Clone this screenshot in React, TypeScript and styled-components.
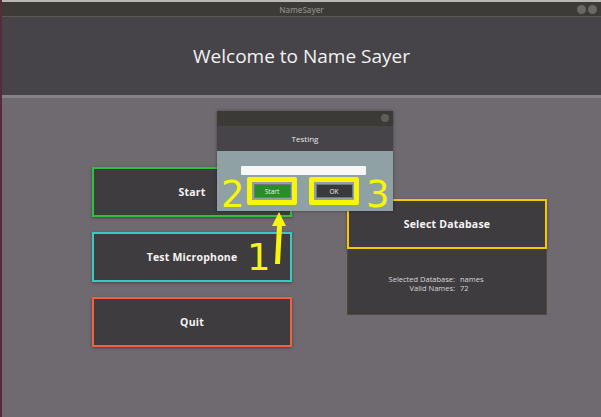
import React from "react";
import styled, { createGlobalStyle } from "styled-components";

const Global = createGlobalStyle`
  html, body { margin: 0; padding: 0; background: #6e6a70; }
  body { font-family: "Open Sans", "DejaVu Sans", sans-serif; overflow: hidden; }
  * { box-sizing: border-box; }
`;

const Screen = styled.div`
  position: relative;
  width: 601px;
  height: 417px;
  overflow: hidden;
  background: #6e6a70;
  border-left: 2px solid #5a2a3a;
`;

const TopStrip = styled.div`
  height: 2px;
  background: #b9b7b3;
`;

const TitleBar = styled.div`
  position: relative;
  height: 15px;
  background: #3c3b37;
  border-bottom: 1px solid #5a5955;
  display: flex;
  align-items: center;
  justify-content: center;
  font-size: 8px;
  color: #8a8883;
  font-weight: 600;
`;

const WinButtons = styled.div`
  position: absolute;
  right: 4px;
  top: 3px;
  display: flex;
  gap: 2px;
`;

const Dot = styled.span`
  width: 9px;
  height: 9px;
  border-radius: 50%;
  background: #6a6965;
`;

const Header = styled.div`
  height: 78px;
  background: #464448;
  display: flex;
  align-items: center;
  justify-content: center;
  color: #f2f2f2;
  font-size: 19px;
`;

const Divider = styled.div`
  height: 3px;
  background: #858188;
`;

const Body = styled.div`
  display: flex;
  align-items: flex-start;
  padding: 69px 0 0 90px;
  gap: 55px;
`;

const Column = styled.div<{ $top?: number }>`
  display: flex;
  flex-direction: column;
  gap: 15px;
  width: 200px;
  margin-top: ${(p) => p.$top ?? 0}px;
`;

const MenuButton = styled.div<{ $color: string }>`
  height: 50px;
  background: #3f3c40;
  border: 2px solid ${(p) => p.$color};
  box-shadow: 0 1px 3px rgba(0, 0, 0, 0.35);
  display: flex;
  align-items: center;
  justify-content: center;
  color: #f4f4f4;
  font-weight: 700;
  font-size: 10.5px;
  letter-spacing: 0.2px;
`;

const DbGroup = styled.div`
  display: flex;
  flex-direction: column;
  width: 200px;
`;

const InfoPanel = styled.div`
  height: 66px;
  background: #3f3c40;
  border: 1px solid #4d4a3c;
  border-top: none;
  display: grid;
  grid-template-columns: 107px 1fr;
  column-gap: 5px;
  align-content: center;
  font-size: 7.5px;
  color: #d8d8d8;
  line-height: 9px;
  padding-top: 4px;
`;

const InfoLabel = styled.span`
  text-align: right;
`;

const Dialog = styled.div`
  position: absolute;
  left: 215px;
  top: 111px;
  width: 176px;
  height: 100px;
  display: flex;
  flex-direction: column;
  box-shadow: 0 0 3px rgba(0, 0, 0, 0.4);
`;

const DialogTitle = styled.div`
  position: relative;
  height: 15px;
  background: #3b3a36;
`;

const CloseDot = styled.span`
  position: absolute;
  right: 4px;
  top: 3px;
  width: 8px;
  height: 8px;
  border-radius: 50%;
  background: #5f5e5a;
`;

const DialogHeader = styled.div`
  height: 25px;
  background: #464448;
  display: flex;
  align-items: center;
  justify-content: center;
  color: #e8e8e8;
  font-size: 8px;
`;

const DialogBody = styled.div`
  flex: 1;
  background: #8fa1a4;
  display: flex;
  flex-direction: column;
  align-items: center;
  padding-top: 15px;
`;

const Progress = styled.div`
  width: 125px;
  height: 9px;
  background: #f7f7f7;
  border-radius: 1px;
  margin-right: 4px;
`;

const DialogButtons = styled.div`
  display: flex;
  gap: 12px;
  margin-top: 2px;
  margin-left: -4px;
`;

const Highlight = styled.div`
  width: 50px;
  height: 28px;
  border: 5px solid #f7f50a;
  border-radius: 2px;
  display: flex;
  align-items: center;
  justify-content: center;
`;

const SmallButton = styled.div<{ $bg: string }>`
  width: 37px;
  height: 14px;
  background: ${(p) => p.$bg};
  border: 1px solid #6b7a7c;
  display: flex;
  align-items: center;
  justify-content: center;
  color: #f0f0f0;
  font-size: 6.5px;
`;

const Num = styled.span<{ $x: number; $y: number }>`
  position: absolute;
  left: ${(p) => p.$x}px;
  top: ${(p) => p.$y}px;
  color: #f7f50a;
  font-family: "DejaVu Sans", sans-serif;
  font-size: 37px;
  line-height: 1;
`;

const Arrow = styled.svg`
  position: absolute;
  left: 262px;
  top: 209px;
`;

export default function App() {
  return (
    <>
      <Global />
      <Screen>
        <TopStrip />
        <TitleBar>
          NameSayer
          <WinButtons>
            <Dot />
            <Dot />
          </WinButtons>
        </TitleBar>
        <Header>Welcome to Name Sayer</Header>
        <Divider />
        <Body>
          <Column>
            <MenuButton $color="#2fc13a">Start</MenuButton>
            <MenuButton $color="#3cc9c0">Test Microphone</MenuButton>
            <MenuButton $color="#f0613f">Quit</MenuButton>
          </Column>
          <Column $top={32}>
            <DbGroup>
              <MenuButton $color="#f5c800">Select Database</MenuButton>
              <InfoPanel>
                <InfoLabel>Selected Database:</InfoLabel>
                <span>names</span>
                <InfoLabel>Valid Names:</InfoLabel>
                <span>72</span>
              </InfoPanel>
            </DbGroup>
          </Column>
        </Body>

        <Dialog>
          <DialogTitle>
            <CloseDot />
          </DialogTitle>
          <DialogHeader>Testing</DialogHeader>
          <DialogBody>
            <Progress />
            <DialogButtons>
              <Highlight>
                <SmallButton $bg="#2a8c2a">Start</SmallButton>
              </Highlight>
              <Highlight>
                <SmallButton $bg="#3a393d">OK</SmallButton>
              </Highlight>
            </DialogButtons>
          </DialogBody>
        </Dialog>

        <Num $x={219} $y={176}>2</Num>
        <Num $x={364} $y={176}>3</Num>
        <Num $x={245} $y={239}>1</Num>
        <Arrow width="30" height="80" viewBox="0 0 30 80">
          <path d="M15 3 L8 17 L13 17 L11 55 L16 55 L18 17 L22 17 Z" fill="#f7f50a" />
        </Arrow>
      </Screen>
    </>
  );
}
